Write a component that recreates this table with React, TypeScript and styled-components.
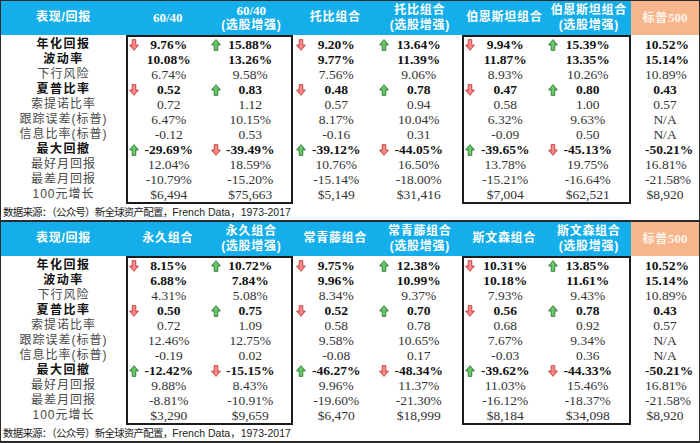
import React from "react"
import styled, { createGlobalStyle } from "styled-components"

const GlobalStyle = createGlobalStyle`
  html, body {
    margin: 0;
    padding: 0;
    background: #ffffff;
  }
`

type Trend = "up" | "down" | undefined

interface Metric {
  label: string
  bold?: boolean
  arrows?: boolean
}

const METRICS: Metric[] = [
  { label: "年化回报", bold: true, arrows: true },
  { label: "波动率", bold: true },
  { label: "下行风险" },
  { label: "夏普比率", bold: true, arrows: true },
  { label: "索提诺比率" },
  { label: "跟踪误差(标普)" },
  { label: "信息比率(标普)" },
  { label: "最大回撤", bold: true, arrows: true },
  { label: "最好月回报" },
  { label: "最差月回报" },
  { label: "100元增长" },
]

interface Portfolio {
  name: string
  sub?: string
  values: string[]
}

interface TableData {
  pairs: [Portfolio, Portfolio][]
  sp500: string[]
}

const SP500 = [
  "10.52%", "15.14%", "10.89%", "0.43", "0.57", "N/A", "N/A",
  "-50.21%", "16.81%", "-21.58%", "$8,920",
]

const TABLE_ONE: TableData = {
  pairs: [
    [
      { name: "60/40", values: ["9.76%", "10.08%", "6.74%", "0.52", "0.72", "6.47%", "-0.12", "-29.69%", "12.04%", "-10.79%", "$6,494"] },
      { name: "60/40", sub: "(选股增强)", values: ["15.88%", "13.26%", "9.58%", "0.83", "1.12", "10.15%", "0.53", "-39.49%", "18.59%", "-15.20%", "$75,663"] },
    ],
    [
      { name: "托比组合", values: ["9.20%", "9.77%", "7.56%", "0.48", "0.57", "8.17%", "-0.16", "-39.12%", "10.76%", "-15.14%", "$5,149"] },
      { name: "托比组合", sub: "(选股增强)", values: ["13.64%", "11.39%", "9.06%", "0.78", "0.94", "10.04%", "0.31", "-44.05%", "16.50%", "-18.00%", "$31,416"] },
    ],
    [
      { name: "伯恩斯坦组合", values: ["9.94%", "11.87%", "8.93%", "0.47", "0.58", "6.32%", "-0.09", "-39.65%", "13.78%", "-15.21%", "$7,004"] },
      { name: "伯恩斯坦组合", sub: "(选股增强)", values: ["15.39%", "13.35%", "10.26%", "0.80", "1.00", "9.63%", "0.50", "-45.13%", "19.75%", "-16.64%", "$62,521"] },
    ],
  ],
  sp500: SP500,
}

const TABLE_TWO: TableData = {
  pairs: [
    [
      { name: "永久组合", values: ["8.15%", "6.88%", "4.31%", "0.50", "0.72", "12.46%", "-0.19", "-12.42%", "9.88%", "-8.81%", "$3,290"] },
      { name: "永久组合", sub: "(选股增强)", values: ["10.72%", "7.84%", "5.08%", "0.75", "1.09", "12.75%", "0.02", "-15.15%", "8.43%", "-10.91%", "$9,659"] },
    ],
    [
      { name: "常青藤组合", values: ["9.75%", "9.96%", "8.34%", "0.52", "0.58", "9.58%", "-0.08", "-46.27%", "9.96%", "-19.60%", "$6,470"] },
      { name: "常青藤组合", sub: "(选股增强)", values: ["12.38%", "10.99%", "9.37%", "0.70", "0.78", "10.65%", "0.17", "-48.34%", "11.37%", "-21.30%", "$18,999"] },
    ],
    [
      { name: "斯文森组合", values: ["10.31%", "10.18%", "7.93%", "0.56", "0.68", "7.67%", "-0.03", "-39.62%", "11.03%", "-16.12%", "$8,184"] },
      { name: "斯文森组合", sub: "(选股增强)", values: ["13.85%", "11.61%", "9.43%", "0.78", "0.92", "9.34%", "0.36", "-44.33%", "15.46%", "-18.37%", "$34,098"] },
    ],
  ],
  sp500: SP500,
}

// group widths: label 125, three pairs, sp500 68 -> 698 + 2px frame
const LABEL_W = 125
const GROUP_W = [167, 169, 169]
const SP_W = 68
const ROW_H = 15

const CJK = `"Liberation Sans", "Noto Sans CJK SC", sans-serif`
const SERIF = `"Liberation Serif", "Noto Sans CJK SC", serif`

const Sheet = styled.div`
  width: 700px;
  height: 443px;
  box-sizing: border-box;
  border-top: 1px solid #2a2a2a;
  background: #ffffff;
`

const Section = styled.section`
  box-sizing: border-box;
  width: 700px;
  border-left: 1px solid #2a2a2a;
  border-right: 1px solid #2a2a2a;
  border-bottom: 2px solid #2a2a2a;
`

const HeaderRow = styled.div`
  display: flex;
  height: 34px;
  background: #14aeea;
`

const HeadCell = styled.div<{ $w: number; $accent?: boolean }>`
  width: ${(p) => p.$w}px;
  flex: none;
  display: flex;
  flex-direction: column;
  align-items: center;
  justify-content: center;
  background: ${(p) => (p.$accent ? "#f6b58a" : "transparent")};
  color: ${(p) => (p.$accent ? "#fff3ea" : "#ffffff")};
  font-family: ${CJK};
  font-weight: 700;
  font-size: 12px;
  line-height: 15.5px;
  letter-spacing: 0.7px;
  white-space: nowrap;
`

const HeadLatin = styled.span`
  font-family: ${SERIF};
  font-size: 13px;
  letter-spacing: 0;
`

const HeadPair = styled.div<{ $w: number }>`
  width: ${(p) => p.$w}px;
  flex: none;
  display: flex;
  & > * {
    flex: 1;
    width: auto;
  }
`

const Body = styled.div`
  display: flex;
`

const LabelCol = styled.div`
  width: ${LABEL_W}px;
  flex: none;
  padding: 2px 0;
  display: flex;
  flex-direction: column;
`

const LabelCell = styled.div<{ $bold?: boolean }>`
  height: ${ROW_H}px;
  line-height: ${ROW_H}px;
  text-align: center;
  font-family: ${CJK};
  font-size: 12px;
  font-weight: ${(p) => (p.$bold ? 700 : 400)};
  color: ${(p) => (p.$bold ? "#111111" : "#4a4a4a")};
  letter-spacing: ${(p) => (p.$bold ? "1.5px" : "1px")};
  white-space: nowrap;
`

const Group = styled.div<{ $w: number; $boxed?: boolean }>`
  width: ${(p) => p.$w}px;
  flex: none;
  box-sizing: border-box;
  display: flex;
  border: 2px solid ${(p) => (p.$boxed ? "#1c1c1c" : "transparent")};
`

const ValueCol = styled.div`
  flex: 1;
  display: flex;
  flex-direction: column;
`

const ValueCell = styled.div<{ $bold?: boolean }>`
  height: ${ROW_H}px;
  display: grid;
  grid-template-columns: 14px 1fr 14px;
  align-items: center;
  font-family: ${SERIF};
  font-size: 13.5px;
  font-weight: ${(p) => (p.$bold ? 700 : 400)};
  color: ${(p) => (p.$bold ? "#111111" : "#333333")};
`

const Value = styled.span`
  text-align: center;
  line-height: ${ROW_H}px;
  white-space: nowrap;
`

const IconSlot = styled.span`
  display: flex;
  justify-content: flex-start;
  align-items: center;
  padding-left: 1px;
`

const SpCol = styled.div`
  width: ${SP_W}px;
  flex: none;
  padding: 2px 0;
  display: flex;
  flex-direction: column;
`

const Note = styled.div`
  height: 16px;
  line-height: 16px;
  padding-left: 2px;
  font-family: ${CJK};
  font-size: 10.5px;
  color: #222222;
  white-space: nowrap;
`

const NoteCjk = styled.span`
  letter-spacing: -0.8px;
`

const Arrow: React.FC<{ dir: "up" | "down" }> = ({ dir }) => {
  const up = dir === "up"
  const id = up ? "gUp" : "gDown"
  return (
    <svg width="10" height="12" viewBox="0 0 10 12">
      <defs>
        <linearGradient id={id} x1="0" y1="0" x2="1" y2="0">
          <stop offset="0" stopColor={up ? "#2f9a3c" : "#e8474b"} />
          <stop offset="0.5" stopColor={up ? "#6fcf6a" : "#ff8f8f"} />
          <stop offset="1" stopColor={up ? "#3aa646" : "#f05a5e"} />
        </linearGradient>
      </defs>
      <path
        d="M3.2 0.6 H6.8 V6 H9.4 L5 11.4 L0.6 6 H3.2 Z"
        transform={up ? "rotate(180 5 6)" : undefined}
        fill={`url(#${id})`}
        stroke={up ? "#2d6e33" : "#b8383b"}
        strokeWidth="0.8"
        strokeLinejoin="round"
      />
    </svg>
  )
}

const Column: React.FC<{ values: string[]; trendFor: (i: number) => Trend }> = ({
  values,
  trendFor,
}) => (
  <ValueCol>
    {values.map((v, i) => {
      const t = trendFor(i)
      return (
        <ValueCell key={i} $bold={METRICS[i].bold}>
          <IconSlot>{t && <Arrow dir={t} />}</IconSlot>
          <Value>{v}</Value>
          <span />
        </ValueCell>
      )
    })}
  </ValueCol>
)

// first portfolio of a pair: down on return/sharpe, up on drawdown; second is the opposite
const trend = (second: boolean) => (i: number): Trend => {
  if (!METRICS[i].arrows) return undefined
  const isDrawdown = i === 7
  return second !== isDrawdown ? "up" : "down"
}

const HeadText: React.FC<{ p: Portfolio }> = ({ p }) => {
  const latin = /^[0-9/]+$/.test(p.name)
  return (
    <>
      {latin ? <HeadLatin>{p.name}</HeadLatin> : <span>{p.name}</span>}
      {p.sub && <span>{p.sub}</span>}
    </>
  )
}

const PerfTable: React.FC<{ data: TableData }> = ({ data }) => (
  <Section>
    <HeaderRow>
      <HeadCell $w={LABEL_W}>表现/回报</HeadCell>
      {data.pairs.map((pair, g) => (
        <HeadPair key={g} $w={GROUP_W[g]}>
          {pair.map((p, k) => (
            <HeadCell key={k} $w={0}>
              <HeadText p={p} />
            </HeadCell>
          ))}
        </HeadPair>
      ))}
      <HeadCell $w={SP_W} $accent>
        <span>
          标普<HeadLatin>500</HeadLatin>
        </span>
      </HeadCell>
    </HeaderRow>
    <Body>
      <LabelCol>
        {METRICS.map((m) => (
          <LabelCell key={m.label} $bold={m.bold}>
            {m.label}
          </LabelCell>
        ))}
      </LabelCol>
      {data.pairs.map((pair, g) => (
        <Group key={g} $w={GROUP_W[g]} $boxed={g !== 1}>
          <Column values={pair[0].values} trendFor={trend(false)} />
          <Column values={pair[1].values} trendFor={trend(true)} />
        </Group>
      ))}
      <SpCol>
        {data.sp500.map((v, i) => (
          <ValueCell key={i} $bold={METRICS[i].bold}>
            <span />
            <Value>{v}</Value>
            <span />
          </ValueCell>
        ))}
      </SpCol>
    </Body>
    <Note>
      <NoteCjk>数据来源：（公众号）新全球资产配置，</NoteCjk>French Data，1973-2017
    </Note>
  </Section>
)

export default function App() {
  return (
    <>
      <GlobalStyle />
      <Sheet>
        <PerfTable data={TABLE_ONE} />
        <PerfTable data={TABLE_TWO} />
      </Sheet>
    </>
  )
}
